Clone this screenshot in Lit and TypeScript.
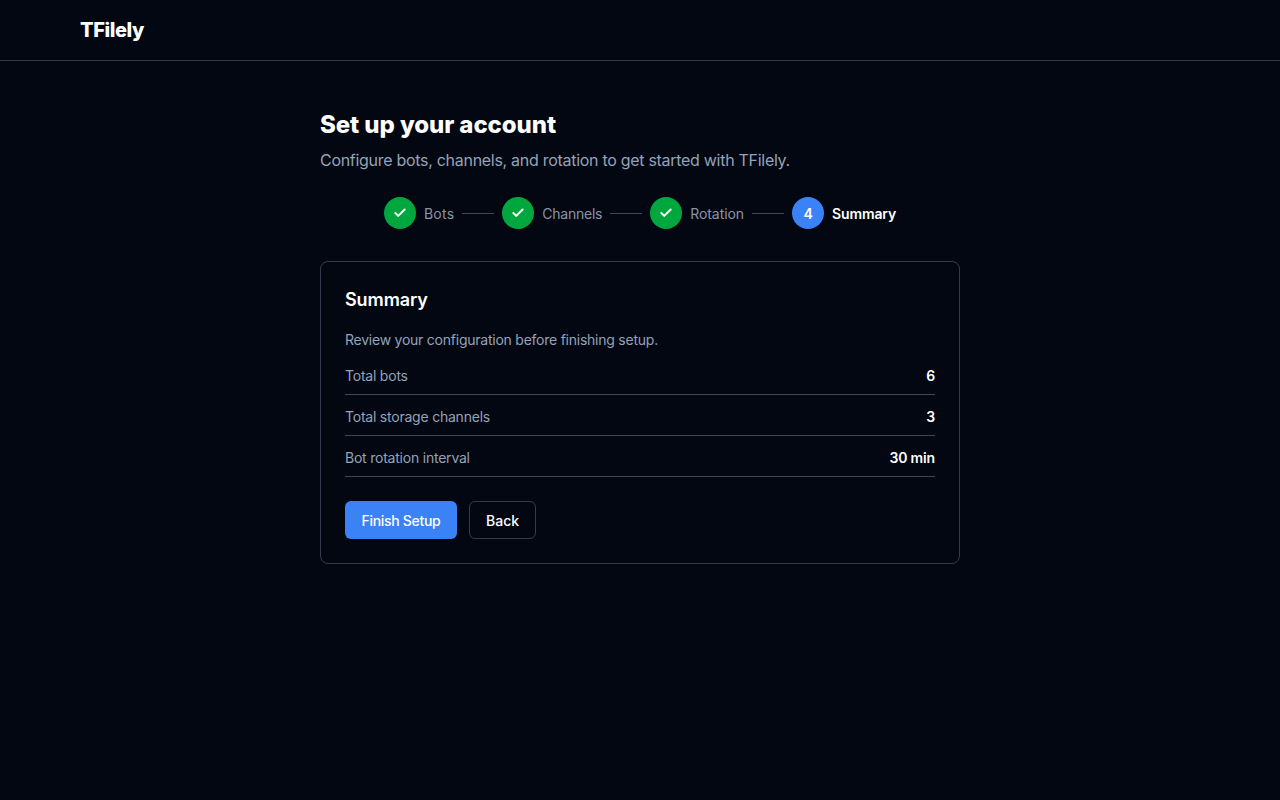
import { LitElement, css, html } from "lit";
import { customElement } from "lit/decorators.js";

const steps = [
  { label: "Bots", done: true, track: 0.25 },
  { label: "Channels", done: true, track: -0.25 },
  { label: "Rotation", done: true, track: -0.06 },
  { label: "Summary", done: false, track: -0.14 },
];

const rows = [
  ["Total bots", "6"],
  ["Total storage channels", "3"],
  ["Bot rotation interval", "30 min"],
];

@customElement("app-root")
export class AppRoot extends LitElement {
  static styles = css`
    :host {
      display: block;
      min-height: 800px;
      background: #020712;
      color: #f8fafc;
      font-family: Inter, "Liberation Sans", sans-serif;
    }
    .topbar {
      height: 60px;
      border-bottom: 1px solid #343b4c;
      display: flex;
      align-items: center;
      padding: 0 80px;
    }
    .logo {
      font-size: 20px;
      font-weight: 800;
      letter-spacing: -0.4px;
      color: #fff;
    }
    main {
      width: 640px;
      margin: 0 auto;
      padding-top: 48px;
    }
    h1 {
      margin: 0;
      font-size: 24px;
      line-height: 32px;
      font-weight: 800;
      letter-spacing: -0.08px;
      color: #fff;
    }
    .sub {
      margin: 7px 0 0;
      font-size: 16px;
      line-height: 24px;
      letter-spacing: -0.29px;
      color: #94a3b8;
    }
    .steps {
      display: flex;
      justify-content: center;
      align-items: center;
      gap: 8px;
      margin-top: 25px;
    }
    .dot {
      width: 32px;
      height: 32px;
      border-radius: 50%;
      display: flex;
      align-items: center;
      justify-content: center;
      background: #00a63e;
      color: #fff;
      font-size: 14px;
      font-weight: 600;
    }
    .dot.current {
      background: #3b82f6;
    }
    .label {
      font-size: 14px;
      color: #8a94a6;
    }
    .label.current {
      color: #fff;
      font-weight: 600;
    }
    .line {
      width: 32px;
      height: 1px;
      background: #3f4757;
    }
    .card {
      margin-top: 32px;
      border: 1px solid #343b4c;
      border-radius: 8px;
      padding: 24px;
    }
    h2 {
      margin: 0;
      font-size: 18px;
      line-height: 28px;
      font-weight: 600;
      letter-spacing: -0.1px;
      color: #fff;
    }
    .desc {
      margin: 16px 0 4px;
      font-size: 14px;
      line-height: 20px;
      letter-spacing: -0.24px;
      color: #94a3b8;
    }
    .row {
      display: flex;
      justify-content: space-between;
      padding: 12px 0 8px;
      font-size: 14px;
      line-height: 20px;
      border-bottom: 1px solid #3f4757;
    }
    .row span {
      color: #94a3b8;
      letter-spacing: -0.22px;
    }
    .row b {
      font-weight: 600;
      letter-spacing: -0.15px;
      color: #fff;
    }
    .actions {
      display: flex;
      gap: 12px;
      margin-top: 24px;
    }
    button {
      height: 38px;
      padding: 0 16px;
      border-radius: 6px;
      border: 1px solid transparent;
      font: 500 14px Inter, "Liberation Sans", sans-serif;
      color: #fff;
    }
    .primary {
      background: #3b82f6;
      letter-spacing: -0.3px;
    }
    .secondary {
      background: transparent;
      border-color: #343b4c;
    }
  `;

  render() {
    return html`
      <header class="topbar"><div class="logo">TFilely</div></header>
      <main>
        <h1>Set up your account</h1>
        <p class="sub">Configure bots, channels, and rotation to get started with TFilely.</p>
        <div class="steps">
          ${steps.map(
            (s, i) => html`
              ${i > 0 ? html`<div class="line"></div>` : ""}
              <div class="dot ${s.done ? "" : "current"}">
                ${s.done
                  ? html`<svg width="14" height="14" viewBox="0 0 24 24" fill="none" stroke="currentColor" stroke-width="3.4" stroke-linecap="round" stroke-linejoin="round"><path d="M20 6 9 17l-5-5"></path></svg>`
                  : i + 1}
              </div>
              <div class="label ${s.done ? "" : "current"}" style="letter-spacing:${s.track}px">${s.label}</div>
            `
          )}
        </div>
        <section class="card">
          <h2>Summary</h2>
          <p class="desc">Review your configuration before finishing setup.</p>
          ${rows.map(([k, v]) => html`<div class="row"><span>${k}</span><b>${v}</b></div>`)}
          <div class="actions">
            <button class="primary" style="width:112px;padding:0">Finish Setup</button>
            <button class="secondary">Back</button>
          </div>
        </section>
      </main>
    `;
  }
}
